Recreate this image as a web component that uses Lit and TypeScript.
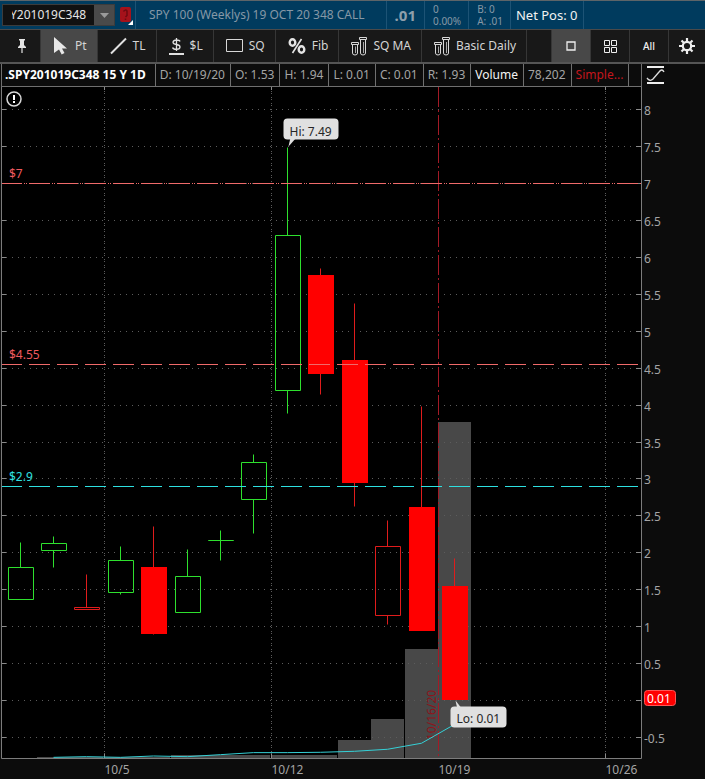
import { LitElement, html, svg, css, nothing } from "lit";
import { customElement, state } from "lit/decorators.js";
import { classMap } from "lit/directives/class-map.js";

interface Candle {
  high: number;
  top: number;
  bottom: number;
  low: number;
  up: boolean;
  filled?: boolean;
  /** share of the plot height taken by the volume bar */
  volume: number;
  average?: number;
}

const CANDLES: Candle[] = [
  { high: 2.14, top: 1.8, bottom: 1.37, low: 1.37, up: true, volume: 0 },
  { high: 2.22, top: 2.12, bottom: 2.03, low: 1.8, up: true, volume: 0.002, average: 0.001 },
  { high: 1.71, top: 1.26, bottom: 1.23, low: 1.23, up: false, volume: 0.002, average: 0.002 },
  { high: 2.08, top: 1.89, bottom: 1.46, low: 1.43, up: true, volume: 0.002, average: 0.001 },
  { high: 2.36, top: 1.8, bottom: 0.91, low: 0.89, up: false, filled: true, volume: 0.002, average: 0.003 },
  { high: 2.05, top: 1.68, bottom: 1.19, low: 1.19, up: true, volume: 0.004, average: 0.002 },
  { high: 2.3, top: 2.165, bottom: 2.165, low: 1.9, up: true, volume: 0.004, average: 0.005 },
  { high: 3.33, top: 3.22, bottom: 2.72, low: 2.26, up: true, volume: 0.004, average: 0.008 },
  { high: 7.49, top: 6.3, bottom: 4.2, low: 3.89, up: true, volume: 0.004, average: 0.008 },
  { high: 5.85, top: 5.76, bottom: 4.43, low: 4.14, up: false, filled: true, volume: 0.004, average: 0.0085 },
  { high: 5.37, top: 4.6, bottom: 2.95, low: 2.63, up: false, filled: true, volume: 0.027, average: 0.01 },
  { high: 2.44, top: 2.09, bottom: 1.15, low: 1.03, up: false, volume: 0.058, average: 0.013 },
  { high: 3.98, top: 2.62, bottom: 0.95, low: 0.95, up: false, filled: true, volume: 0.163, average: 0.022 },
  { high: 1.93, top: 1.54, bottom: 0.01, low: 0.01, up: false, filled: true, volume: 0.501, average: 0.05 },
];

const WEEKS = [
  { slot: 3, label: "10/5" },
  { slot: 8, label: "10/12" },
  { slot: 13, label: "10/19", expiry: "10/16/20" },
  { slot: 18, label: "10/26" },
];

const LEVELS = [
  { price: 7, label: "$7", kind: "dotdash" },
  { price: 4.55, label: "$4.55", kind: "dash" },
  { price: 2.9, label: "$2.9", kind: "cyan" },
];

const PRICE_TOP = 8.308;
const PRICE_SPAN = 9.086;
const SLOTS = 19.15;
const AXIS_W = 64;
const AXIS_H = 21;

const snap = (v: number) => Math.floor(v) + 0.5;

@customElement("price-chart")
export class PriceChart extends LitElement {
  static styles = css`
    :host {
      display: block;
      position: relative;
      min-height: 320px;
      background: #0c0c0c;
    }
    svg {
      position: absolute;
      inset: 0;
      width: 100%;
      height: 100%;
      font: 12px "Noto Sans", "Open Sans", sans-serif;
    }
    .plot { fill: #000; }
    .frame { stroke: #7c7c7c; fill: none; }
    .grid { stroke: #5c5c5c; stroke-dasharray: 1 5; }
    .vgrid { stroke: #5c5c5c; stroke-dasharray: 1 3 1 1; }
    .tick { stroke: #8a8a8a; }
    .axis { fill: #a4a4a4; }
    .volume { fill: #484848; }
    .average { stroke: #35d0d6; fill: none; }
    .up { stroke: #2ee02e; fill: none; }
    .down { stroke: #e01c1c; fill: none; }
    .solid { fill: #f00; stroke: none; }
    .level { stroke: #f06a6a; }
    .level.dash, .level.cyan { stroke-dasharray: 21 7; }
    .level.dotdash { stroke-dasharray: 21 2 1 1 1 2; }
    .level.cyan { stroke: #2ee0e0; }
    .label { fill: #ef5a5f; }
    .label.cyan { fill: #2ee0e0; }
    .expiry { stroke: #a31a26; stroke-dasharray: 20 3 2 3; }
    .expiry-label { fill: #8c141c; }
    .bubble { fill: #e0e0e0; }
    .bubble-text { fill: #262626; }
    .last { fill: #f00; stroke: #f55; }
    .last-text { fill: #fff; }
    .ring { fill: #000; stroke: #d8d8d8; stroke-width: 1.5; }
    .bang { fill: #fff; }
  `;

  @state() private w = 705;
  @state() private h = 692;

  private observer = new ResizeObserver(([entry]) => {
    this.w = Math.round(entry.contentRect.width);
    this.h = Math.round(entry.contentRect.height);
  });

  connectedCallback() {
    super.connectedCallback();
    this.observer.observe(this);
  }

  disconnectedCallback() {
    this.observer.disconnect();
    super.disconnectedCallback();
  }

  render() {
    const right = this.w - AXIS_W;
    const bottom = this.h - AXIS_H;
    const step = (right - 1) / SLOTS;
    const x = (i: number) => snap(1 + (i + 0.57) * step);
    const edge = (i: number) => snap(1.7 + (i + 0.07) * step);
    const y = (p: number) => snap(((PRICE_TOP - p) * bottom) / PRICE_SPAN);
    const half = Math.round(step * 0.39);
    const prices = Array.from({ length: 18 }, (_, i) => 8 - i * 0.5);
    const average = CANDLES.map((c, i) =>
      c.average === undefined ? "" : `${x(i)},${bottom - c.average * bottom}`,
    ).join(" ");
    const hiX = x(8);
    const hiY = y(7.49);
    const loX = x(13);
    const loY = y(0.01);

    return html`<svg role="img" aria-label="Daily price chart">
      <rect class="plot" x="1" y="0" width=${right - 1} height=${bottom}></rect>
      ${CANDLES.map(
        (c, i) => svg`<rect class="volume" x=${edge(i) - 0.5} y=${Math.round(bottom - c.volume * bottom)}
          width=${Math.round(step)} height=${Math.round(c.volume * bottom)}></rect>`,
      )}
      ${prices.map(
        (p) => svg`<line class="grid" x1="6" x2=${right} y1=${y(p)} y2=${y(p)}></line>
          <path class="tick" d=${`M2 ${y(p)}h4M${right - 5} ${y(p)}h5`}></path>
          ${p === 0 ? nothing : svg`<text class="axis" x=${right + 3} y=${y(p) + 5}>${p}</text>`}`,
      )}
      ${WEEKS.map(
        (k) => svg`${
          k.expiry
            ? svg`<line class="expiry" x1=${edge(k.slot)} x2=${edge(k.slot)} y1="0" y2=${bottom}></line>
              <text class="expiry-label" transform=${`translate(${edge(k.slot) - 3} ${bottom - 18}) rotate(-90)`}>${k.expiry}</text>`
            : svg`<line class="vgrid" x1=${edge(k.slot)} x2=${edge(k.slot)} y1="0" y2=${bottom}></line>
              <path class="tick" d=${`M${edge(k.slot)} ${bottom - 4}v4M${edge(k.slot)} 0v3`}></path>`
        }
          <text class="axis" x=${edge(k.slot)} y=${this.h - 5}>${k.label}</text>`,
      )}
      ${CANDLES.map((c, i) => {
        const cx = x(i);
        const t = y(c.top);
        const b = y(c.bottom);
        return svg`<path class=${c.up ? "up" : "down"} d=${`M${cx} ${y(c.high)}V${t}M${cx} ${b}V${y(c.low)}`}></path>
          ${
            c.filled
              ? svg`<rect class="solid" x=${cx - half + 0.5} y=${t - 0.5} width=${half * 2} height=${b - t + 1}></rect>`
              : svg`<path class=${c.up ? "up" : "down"} d=${`M${cx - half + 1} ${t}h${half * 2 - 1}V${b}h${1 - half * 2}z`}></path>`
          }`;
      })}
      ${LEVELS.map(
        (l) => svg`<line class="level ${l.kind}" x1="1" x2=${right} y1=${y(l.price)} y2=${y(l.price)}></line>
          <text class="label ${l.kind}" x="9" y=${y(l.price) - 6}>${l.label}</text>`,
      )}
      <polyline class="average" points=${average}></polyline>
      <path class="frame" d=${`M1.5 0V${bottom + 0.5}H${right + 0.5}V0`}></path>

      <path class="bubble" d=${`M${hiX + 1} ${hiY - 1}l2-9h6z`}></path>
      <rect class="bubble" x=${hiX - 4} y=${hiY - 29} width="55" height="21" rx="4"></rect>
      <text class="bubble-text" x=${hiX + 2} y=${hiY - 12}>Hi: 7.49</text>

      <path class="bubble" d=${`M${loX + 1} ${loY + 1}l2 9h5z`}></path>
      <rect class="bubble" x=${loX - 4} y=${loY + 7} width="56" height="21" rx="4"></rect>
      <text class="bubble-text" x=${loX + 2} y=${loY + 23}>Lo: 0.01</text>

      <rect class="last" x=${right + 3.5} y=${loY - 9} width="31" height="15" rx="3"></rect>
      <text class="last-text" x=${right + 6} y=${loY + 3}>0.01</text>

      <circle class="ring" cx="14" cy="12" r="7"></circle>
      <path class="bang" d="M13 8h2v5h-2zM13 14h2v2h-2z"></path>
    </svg>`;
  }
}

const ICONS = {
  pin: html`<svg width="10" height="14" viewBox="0 0 10 14"><path fill="#e4e4e4" d="M2 0h6v1.500H7V6l2 2v1H5.600v5H4.400V9H1V8l2-2V1.500H2z"></path></svg>`,
  pointer: html`<svg width="16" height="18" viewBox="0 0 16 18"><path fill="#e8e8e8" d="M1 0l13 11.500H9l2.500 4.500-2.800 1.500L6 12.500 1 16z"></path></svg>`,
  trend: html`<svg width="17" height="18" viewBox="0 0 17 18"><path d="M1 16.500L16 1.500" stroke="#e0e0e0" stroke-width="2"></path></svg>`,
  dollar: html`<svg width="15" height="18" viewBox="0 0 15 18"><path fill="none" stroke="#e0e0e0" stroke-width="1.300" d="M11 4.500Q10.500 3 7.500 3T4 5.200q0 1.800 3.500 2.300T11 10q0 2.300-3.500 2.300T3.600 10.500M7.500 1v13"></path><path fill="#e0e0e0" d="M0 16h15v2H0z"></path></svg>`,
  square: html`<svg width="17" height="14" viewBox="0 0 17 14"><path fill="none" stroke="#d8d8d8" d="M.5.500h16v12H.5z"></path></svg>`,
  percent: html`<svg width="18" height="16" viewBox="0 0 18 16"><g fill="none" stroke="#e4e4e4"><ellipse cx="4.500" cy="4.500" rx="2.800" ry="3.300" stroke-width="2.400"></ellipse><ellipse cx="13.500" cy="11.500" rx="2.800" ry="3.300" stroke-width="2.400"></ellipse><path d="M13.500 1L4.500 15" stroke-width="1.600"></path></g></svg>`,
  flasks: html`<svg width="16" height="19" viewBox="0 0 16 19"><g fill="none" stroke="#d8d8d8"><path d="M.5 5.500h7v2h-7zM1.500 7.500V16q0 2 2.500 2t2.500-2V7.500M8.500.500h7v2h-7zM9.500 2.500V16q0 2 2.500 2t2.500-2V2.500"></path><path stroke="#a8a8a8" d="M4.500 9.500V16M12.500 5v11"></path></g></svg>`,
  single: html`<svg width="10" height="10" viewBox="0 0 10 10"><path fill="none" stroke="#eee" stroke-width="1.300" d="M1 1h8v8H1z"></path></svg>`,
  quad: html`<svg width="13" height="13" viewBox="0 0 13 13"><path fill="none" stroke="#eee" d="M.5.500h5v5h-5zM7.500.500h5v5h-5zM.5 7.500h5v5h-5zM7.500 7.500h5v5h-5z"></path></svg>`,
  gear: html`<svg width="16" height="16" viewBox="-8 -8 16 16"><circle r="4.200" fill="none" stroke="#eee" stroke-width="2.200"></circle><path stroke="#eee" stroke-width="2.200" d="M0-8v3.500M0 8V4.500M-8 0h3.500M8 0H4.500M-5.500-5.500l2.300 2.300M5.500 5.500L3.200 3.200M-5.500 5.500l2.300-2.300M5.500-5.500L3.200-3.200"></path></svg>`,
};

const TOOLS: { icon: keyof typeof ICONS; text?: string; name: string }[] = [
  { icon: "pin", name: "Pin" },
  { icon: "pointer", text: "Pt", name: "Pointer" },
  { icon: "trend", text: "TL", name: "Trend line" },
  { icon: "dollar", text: "$L", name: "Price level" },
  { icon: "square", text: "SQ", name: "Rectangle" },
  { icon: "percent", text: "Fib", name: "Fibonacci" },
  { icon: "flasks", text: "SQ MA", name: "SQ MA" },
  { icon: "flasks", text: "Basic Daily", name: "Basic Daily" },
];

const READOUT = [
  { text: ".SPY201019C348 15 Y 1D", cls: "title" },
  { text: "D: 10/19/20", cls: "" },
  { text: "O: 1.53", cls: "" },
  { text: "H: 1.94", cls: "" },
  { text: "L: 0.01", cls: "" },
  { text: "C: 0.01", cls: "" },
  { text: "R: 1.93", cls: "" },
  { text: "Volume", cls: "white" },
  { text: "78,202", cls: "" },
  { text: "Simple...", cls: "study" },
];

@customElement("app-root")
export class AppRoot extends LitElement {
  static styles = css`
    :host {
      display: flex;
      flex-direction: column;
      min-height: 100vh;
      background: #0c0c0c;
      color: #a4a4a4;
      font: 12px/18px "Noto Sans", "Open Sans", sans-serif;
      white-space: nowrap;
    }
    * { box-sizing: border-box; }
    button {
      display: flex;
      align-items: center;
      justify-content: center;
      margin: 0;
      padding: 0;
      border: 0;
      background: none;
      color: inherit;
      font: inherit;
    }
    .quote {
      display: flex;
      height: 30px;
      border-top: 1px solid #5d6468;
      border-bottom: 1px solid #4a4a4a;
      background: #003b5e;
      color: #8698a6;
    }
    .symbol {
      display: flex;
      align-items: center;
      gap: 5px;
      width: 136px;
      padding-left: 2px;
      border-right: 1px solid #1d5375;
    }
    .combo {
      display: flex;
      height: 22px;
      width: 113px;
      border: 1px solid #3c3c3c;
      background: #111;
    }
    .combo input {
      flex: 1;
      min-width: 0;
      margin: 0 8px 0 9px;
      padding: 0;
      border: 0;
      outline: 0;
      background: none;
      color: #e6e6e6;
      font: inherit;
    }
    .combo button { width: 20px; background: #4a4a4a; }
    .cell {
      display: flex;
      align-items: center;
      border-right: 1px solid #1d5375;
    }
    .name { padding: 0 21px 0 13px; }
    .price { padding: 0 8px; font-size: 15px; font-weight: 700; color: #8f9fab; }
    .pair {
      flex-direction: column;
      align-items: flex-start;
      justify-content: center;
      padding: 0 7px 0 8px;
      font-size: 10px;
      line-height: 12px;
    }
    .net { padding: 0 5px; font-size: 13px; color: #f2f2f2; }
    .tools {
      display: flex;
      height: 34px;
      padding-left: 2px;
      border-bottom: 2px solid #555;
      background: #181818;
      color: #d4d4d4;
    }
    .tools button { gap: 6px; padding: 0 10px 0 12px; border-right: 1px solid #363636; }
    .tools .pin { width: 39px; }
    .tools .on { background: #484848; }
    .spacer { flex: 1; border-right: 1px solid #363636; }
    .tools .view { width: 39px; padding: 0; }
    .tools .view:last-child { width: 36px; border: 0; }
    .all { font-size: 10px; font-weight: 500; color: #eee; }
    .readout {
      display: flex;
      height: 23px;
    }
    .cells {
      display: flex;
      flex: 1;
      min-width: 0;
      overflow: hidden;
      border: 1px solid #707070;
      border-top: 0;
      margin-left: 1px;
    }
    .field { padding: 2px 5px 2px 4px; border-right: 1px solid #707070; }
    .title { padding: 2px 9px 2px 3px; font-weight: 700; color: #fff; }
    .white { color: #f4f4f4; }
    .study { color: #c3161c; }
    .scale { width: 63px; justify-content: flex-start; padding-left: 4px; }
    price-chart { flex: 1; }
  `;

  @state() private tool = 1;
  @state() private view = 0;

  firstUpdated() {
    const input = this.renderRoot.querySelector("input")!;
    input.scrollLeft = input.scrollWidth;
  }

  render() {
    const views = [
      { name: "Single chart", body: ICONS.single },
      { name: "Grid", body: ICONS.quad },
      { name: "All charts", body: html`<span class="all">All</span>` },
      { name: "Settings", body: ICONS.gear },
    ];
    return html`
      <header class="quote">
        <div class="symbol">
          <div class="combo">
            <input aria-label="Symbol" .value=${"Y201019C348"} />
            <button aria-label="Recent symbols">
              <svg width="9" height="5" viewBox="0 0 9 5"><path fill="#9a9a9a" d="M0 0h9L4.500 5z"></path></svg>
            </button>
          </div>
          <button aria-label="Symbol link">
            <svg width="13" height="19" viewBox="0 0 13 19">
              <rect x="0" y="1" width="11" height="15" rx="2" fill="#a5121b"></rect>
              <path d="M3.500 5.500Q5.500 3 7 5v4.500L5.500 11M5.500 12.500V14" fill="none" stroke="#6d0b12" stroke-width="1.500"></path>
              <path d="M13 14v5H8z" fill="#fff"></path>
            </svg>
          </button>
        </div>
        <div class="cell name">SPY 100 (Weeklys) 19 OCT 20 348 CALL</div>
        <div class="cell price">.01</div>
        <div class="cell pair"><span>0</span><span>0.00%</span></div>
        <div class="cell pair"><span>B: 0</span><span>A: .01</span></div>
        <div class="cell net">Net Pos: 0</div>
      </header>
      <nav class="tools">
        ${TOOLS.map(
          (t, i) => html`<button
            class=${classMap({ pin: t.icon === "pin", on: i === this.tool })}
            aria-label=${t.name}
            @click=${() => (this.tool = i)}
          >${ICONS[t.icon]}${t.text ? html`<span>${t.text}</span>` : nothing}</button>`,
        )}
        <div class="spacer"></div>
        ${views.map(
          (v, i) => html`<button
            class=${classMap({ view: true, on: i === this.view })}
            aria-label=${v.name}
            @click=${() => (this.view = i)}
          >${v.body}</button>`,
        )}
      </nav>
      <section class="readout">
        <div class="cells">
          ${READOUT.map((r) => html`<span class="field ${r.cls}">${r.text}</span>`)}
        </div>
        <button class="scale" aria-label="Axis scale">
          <svg width="20" height="19" viewBox="0 0 20 19">
            <path fill="#eee" d="M1 0h17v2H1zM1 16h17v2H1z"></path>
            <path fill="none" stroke="#ddd" stroke-width="1.300" d="M1 12q3 4 6 1L13 6q3-4 5 0"></path>
          </svg>
        </button>
      </section>
      <price-chart></price-chart>
    `;
  }
}
